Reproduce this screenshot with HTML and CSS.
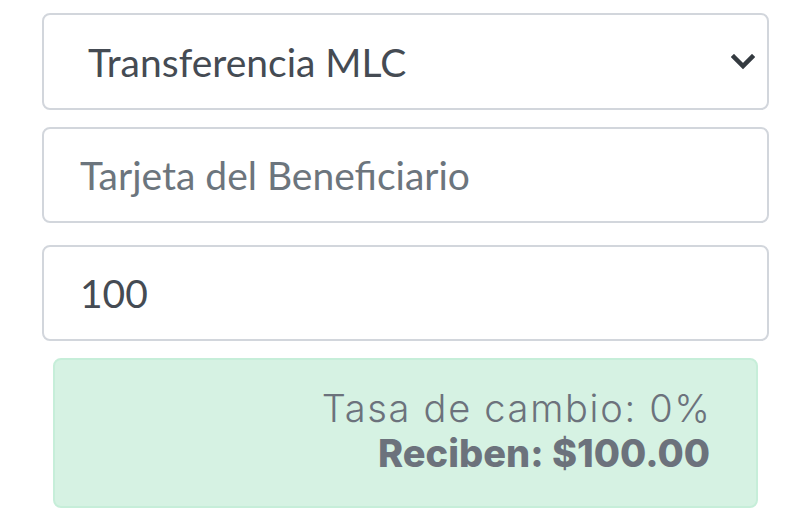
FILE: index.html
```html
<!DOCTYPE html>
<html>
  <head>
    <title>Enviar remesa</title>
    <meta name="viewport" content="width=device-width, initial-scale=1.0" />
    <link rel="stylesheet" href="styles.css">
  </head>
  <body>
    <div class="container">
      <form class="send-form">
        <div class="select-box">
          <span class="select-text">Transferencia MLC</span>
          <svg class="chevron" width="24" height="16" viewBox="0 0 24 16">
            <polyline points="3,3 12,12 21,3" fill="none" stroke="#343a40" stroke-width="4.5" stroke-linecap="square" />
          </svg>
        </div>
        <input class="field field-card" type="text" placeholder="Tarjeta del Beneficiario" />
        <input class="field field-amount" type="text" value="100" />
        <div class="rate-box">
          <div class="rate-line">Tasa de cambio: 0%</div>
          <div class="rate-total">Reciben: $100.00</div>
        </div>
      </form>
    </div>
  </body>
</html>
```

FILE: styles.css
```css
body {
  margin: 0;
  background: white;
  font-family: Lato, "Open Sans", sans-serif;
}
.container {
  width: 727px;
  padding: 13px 0 0 42px;
}
.send-form {
  display: flex;
  flex-direction: column;
}
.select-box {
  box-sizing: border-box;
  height: 97px;
  border: 2px solid #d2d6dc;
  border-radius: 8px;
  display: flex;
  align-items: center;
  justify-content: space-between;
  padding: 0 12px 0 44px;
  margin-bottom: 17px;
}
.select-text {
  font-size: 39px;
  color: #454b53;
}
.chevron {
  display: block;
}
.field {
  box-sizing: border-box;
  height: 96px;
  border: 2px solid #d2d6dc;
  border-radius: 8px;
  padding: 0 36px;
  font-family: Lato, "Open Sans", sans-serif;
  font-size: 39px;
  color: #454b53;
  outline: none;
}
.field::placeholder {
  color: #6c757d;
}
.field-card {
  margin-bottom: 22px;
}
.field-amount {
  margin-bottom: 17px;
}
.rate-box {
  box-sizing: border-box;
  height: 150px;
  margin: 0 11px;
  background: #d6f2e3;
  border: 2px solid #c6eed9;
  border-radius: 8px;
  padding: 26px 46px 0 0;
  text-align: right;
  font-family: Inter, "Open Sans", sans-serif;
  font-size: 38px;
  line-height: 45px;
  color: #6c727c;
}
.rate-line {
  font-weight: 300;
  letter-spacing: 1.7px;
  margin-right: -1.7px;
}
.rate-total {
  font-weight: 800;
}
```
